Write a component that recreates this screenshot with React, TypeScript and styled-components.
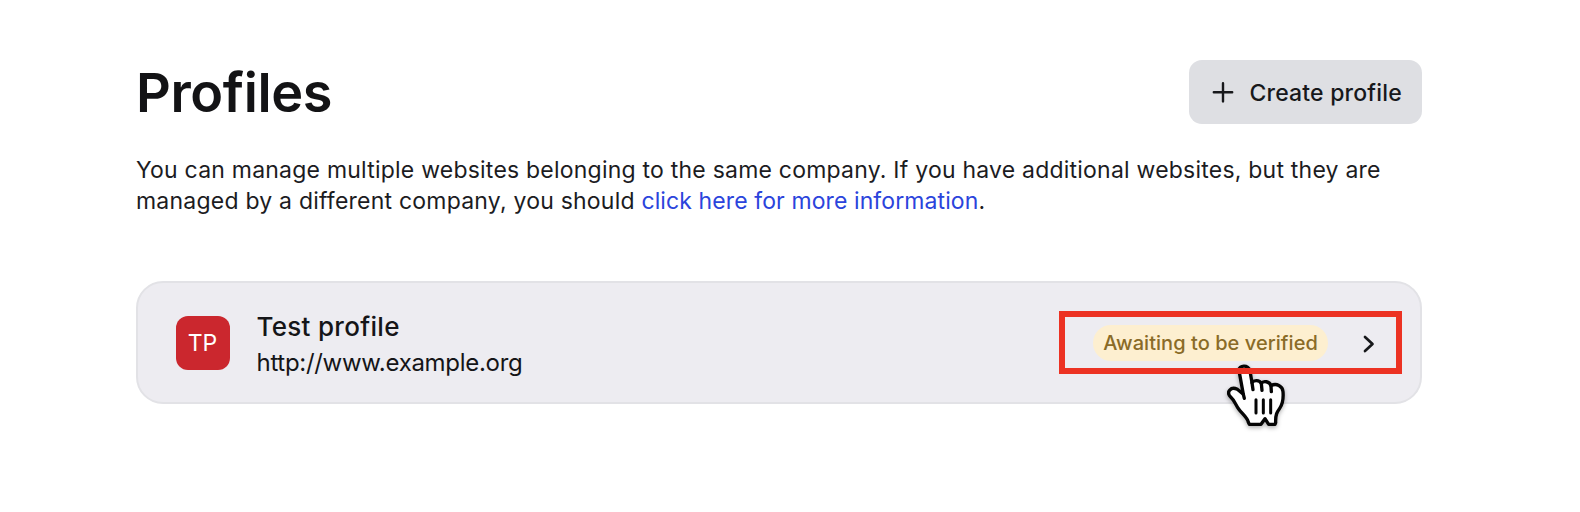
import React from 'react';
import styled, { createGlobalStyle } from 'styled-components';

const GlobalStyle = createGlobalStyle`
  * { box-sizing: border-box; }
  body {
    margin: 0;
    background: #fff;
    color: #151518;
    font-family: Inter, "Liberation Sans", sans-serif;
  }
`;

const Page = styled.main`
  width: 1580px;
  height: 512px;
  padding: 60px 158px 0 136px;
  background: #fff;
`;

const Header = styled.header`
  display: flex;
  align-items: center;
  justify-content: space-between;
  height: 64px;
`;

const Heading = styled.h1`
  margin: 0;
  padding-top: 2px;
  font-size: 54px;
  line-height: 64px;
  font-weight: 600;
  letter-spacing: -0.4px;
  color: #131315;
`;

const CreateButton = styled.button`
  display: flex;
  align-items: center;
  gap: 16px;
  width: 233px;
  height: 64px;
  padding: 2px 0 0 22.5px;
  border: 0;
  border-radius: 13px;
  background: #dedfe3;
  color: #17181b;
  font: 500 23px/30px Inter, "Liberation Sans", sans-serif;
  letter-spacing: 0.18px;
  white-space: nowrap;
`;

const Intro = styled.p`
  margin: 31px 0 0;
  font-size: 23px;
  line-height: 31px;
  letter-spacing: 0.22px;
  white-space: nowrap;
  color: #1c1c1f;
`;

const Link = styled.a`
  color: #2b44dc;
  letter-spacing: 0.1px;
  text-decoration: none;
`;

const Card = styled.section`
  display: flex;
  align-items: center;
  height: 123px;
  margin-top: 64px;
  padding: 0 18px 0 37.5px;
  border: 2px solid #e2e2e6;
  border-radius: 27px;
  background: #edecf1;
`;

const Avatar = styled.div`
  display: flex;
  align-items: center;
  justify-content: center;
  width: 54px;
  height: 54px;
  border-radius: 12px;
  background: #cb272e;
  color: #fff;
  font-size: 23px;
  padding-top: 1px;
`;

const Details = styled.div`
  margin-left: 27px;
  padding-top: 4px;
  flex: 1;
`;

const Name = styled.div`
  font-size: 26px;
  line-height: 36px;
  font-weight: 500;
  letter-spacing: 0.3px;
`;

const Url = styled.div`
  font-size: 24px;
  line-height: 36px;
  letter-spacing: -0.3px;
`;

const Highlight = styled.div`
  position: relative;
  display: flex;
  align-items: center;
  justify-content: space-between;
  width: 343px;
  height: 63px;
  padding: 0 21px 0 28px;
  border: 6px solid #ec3223;
`;

const Badge = styled.span`
  display: flex;
  align-items: center;
  justify-content: center;
  width: 235px;
  height: 36px;
  padding-top: 1px;
  border-radius: 18px;
  background: #fdefd0;
  color: #8a6b27;
  font-size: 20px;
  font-weight: 500;
  letter-spacing: 0.05px;
  white-space: nowrap;
`;

const Pointer = styled.svg`
  position: absolute;
  left: 161px;
  top: 46px;
  filter: drop-shadow(0 2px 2px rgba(0, 0, 0, 0.3));
`;

const FrameEdge = styled.span`
  position: absolute;
  left: -6px;
  right: -6px;
  bottom: -6px;
  height: 6px;
  background: #ec3223;
`;

const PlusIcon = () => (
  <svg width="22" height="22" viewBox="0 0 22 22" fill="none" stroke="currentColor" strokeWidth="2.4" strokeLinecap="round">
    <path d="M11 1.2V19.4M1.8 10.3H20.2" />
  </svg>
);

const Chevron = styled.svg`
  margin-top: 2px;
`;

const ChevronIcon = () => (
  <Chevron width="12" height="18" viewBox="0 0 12 18" fill="none" stroke="#17181b" strokeWidth="2.7" strokeLinecap="round" strokeLinejoin="round">
    <path d="M2 2L9.5 9L2 16" />
  </Chevron>
);

const HandPointer = () => (
  <Pointer width="60" height="65" viewBox="50 40 180 195">
    <path
      d="M89 63C87 46 119 44 122 64L128 99C134 90 150 91 156 101C162 92 181 95 185 108C201 99 220 109 221 126C223 150 218 166 211 176C203 187 198 195 199 219L197 224H178L167 207L155 224H120L117 218C115 204 98 192 88 178C78 164 76 153 64 142C49 127 65 109 84 119L102 134Z"
      fill="#fff"
      stroke="#050505"
      strokeWidth="10"
      strokeLinejoin="round"
    />
    <path d="M102 134L105 146M128 99L131 120M156 101L158 122M185 108L186 126" fill="none" stroke="#050505" strokeWidth="10" strokeLinecap="round" />
    <path d="M140 150V190M162 150V190M184 150V190" fill="none" stroke="#050505" strokeWidth="9" strokeLinecap="round" />
  </Pointer>
);

export default function App() {
  return (
    <>
      <GlobalStyle />
      <Page>
        <Header>
          <Heading>Profiles</Heading>
          <CreateButton type="button">
            <PlusIcon />
            Create profile
          </CreateButton>
        </Header>
        <Intro>
          You can manage multiple websites belonging to the same company. If you have additional websites, but they are
          <br />
          managed by a different company, you should <Link>click here for more information</Link>.
        </Intro>
        <Card>
          <Avatar>TP</Avatar>
          <Details>
            <Name>Test profile</Name>
            <Url>http://www.example.org</Url>
          </Details>
          <Highlight>
            <Badge>Awaiting to be verified</Badge>
            <ChevronIcon />
            <HandPointer />
            <FrameEdge />
          </Highlight>
        </Card>
      </Page>
    </>
  );
}
